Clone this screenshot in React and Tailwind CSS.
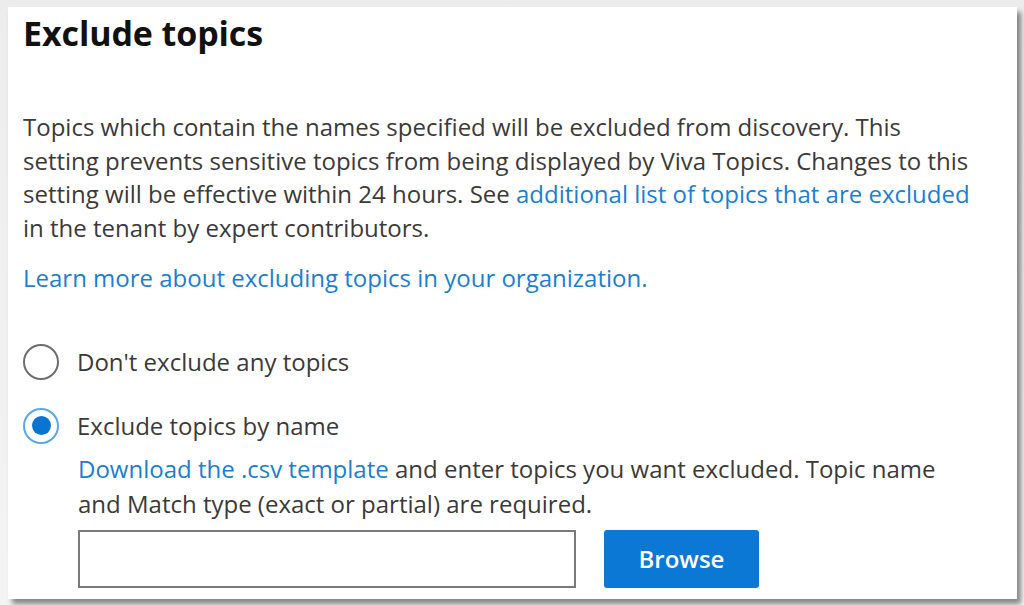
export default function App() {
  return (
    <div className="h-[605px] w-[1024px] overflow-hidden bg-gradient-to-b from-[#ececec] to-[#f4f4f4] pl-[8px] pt-[7px]" style={{ fontFamily: '"Open Sans", "Noto Sans", sans-serif' }}>
      <div className="h-[592px] w-[1009px] bg-white pl-[15px] shadow-[4px_5px_5px_rgba(0,0,0,0.45)]">
        <h1 className="pt-[6px] text-[34px] font-bold leading-[40px] tracking-[-0.1px] text-[#111]">Exclude topics</h1>

        <p className="mt-[57px] whitespace-nowrap text-[24px] leading-[33.7px] text-[#3b3a39]">
          Topics which contain the names specified will be excluded from discovery. This
          <br />
          setting prevents sensitive topics from being displayed by Viva Topics. Changes to this
          <br />
          setting will be effective within 24 hours. See{" "}
          <a className="text-[#1a7fd0]">additional list of topics that are excluded</a>
          <br />
          in the tenant by expert contributors.
        </p>

        <p className="mt-[16px] text-[24px] leading-[33.7px] text-[#1a7fd0]">
          Learn more about excluding topics in your organization.
        </p>

        <div className="mt-[49px] flex flex-col gap-[28px]">
          <label className="flex items-center gap-[18px]">
            <span className="h-[36px] w-[36px] rounded-full border-2 border-[#6e6e6e]" />
            <span className="text-[24px] leading-[36px] text-[#3b3a39]">Don't exclude any topics</span>
          </label>
          <label className="flex items-center gap-[18px]">
            <span className="flex h-[36px] w-[36px] items-center justify-center rounded-full border-2 border-[#5aa8e8]">
              <span className="h-[19px] w-[19px] rounded-full bg-[#0a74d0]" />
            </span>
            <span className="text-[24px] leading-[36px] text-[#3b3a39]">Exclude topics by name</span>
          </label>
        </div>

        <div className="ml-[55px] mt-[7px]">
          <p className="whitespace-nowrap text-[24px] leading-[35px] text-[#3b3a39]">
            <a className="text-[#1a7fd0]">Download the .csv template</a> and enter topics you want excluded. Topic name
            <br />
            and Match type (exact or partial) are required.
          </p>
          <div className="mt-[9px] flex gap-[28px]">
            <div className="h-[58px] w-[498px] border-2 border-[#7a7a7a] bg-white" />
            <button className="h-[58px] w-[155px] rounded-[3px] bg-[#0a78d4] text-[24px] font-semibold text-white">Browse</button>
          </div>
        </div>
      </div>
    </div>
  );
}
